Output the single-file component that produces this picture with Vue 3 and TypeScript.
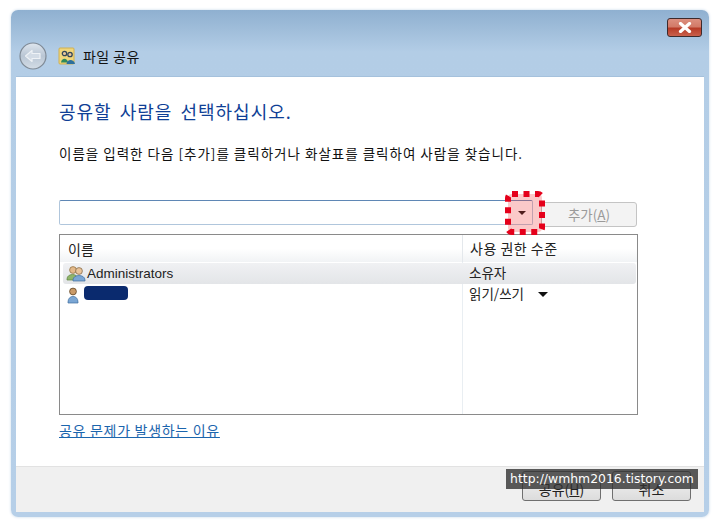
<script setup lang="ts">
// 파일 공유 대화상자
const rows = [
  { name: 'Administrators', level: '소유자', selected: true, hidden: false, menu: false, group: true },
  { name: '', level: '읽기/쓰기', selected: false, hidden: true, menu: true, group: false },
];
</script>

<template>
  <div class="page">
    <div class="window">
      <div class="chrome">
        <div class="close-row">
          <div class="close">
            <svg width="16" height="11" viewBox="0 0 16 11">
              <path d="M3.5 1.5 L12.5 9.5 M12.5 1.5 L3.5 9.5" fill="none" stroke="#fff" stroke-width="3.2" stroke-linecap="round" />
            </svg>
          </div>
        </div>
        <div class="nav-row">
          <div class="back">
            <svg width="28" height="28" viewBox="0 0 28 28">
              <defs>
                <linearGradient id="backFill" x1="0" y1="0" x2="0" y2="1">
                  <stop offset="0" stop-color="#dfe6ee" />
                  <stop offset="0.5" stop-color="#b9c6d4" />
                  <stop offset="1" stop-color="#d4dde6" />
                </linearGradient>
              </defs>
              <circle cx="14" cy="14" r="13" fill="url(#backFill)" stroke="#7f8a96" stroke-width="1.2" />
              <path d="M6.5 14 L13 8.5 V11.5 H21 V16.5 H13 V19.5 Z" fill="#d3dce6" stroke="#eef2f6" stroke-width="1.2" stroke-linejoin="round" />
            </svg>
          </div>
          <svg class="share-icon" width="18" height="18" viewBox="0 0 18 18">
            <rect x="1" y="1" width="15" height="16" rx="1" fill="#f0d67c" stroke="#d0b050" />
            <circle cx="6.5" cy="6.5" r="2.2" fill="#e8c79a" stroke="#33475a" stroke-width="1.3" />
            <circle cx="12" cy="7.5" r="2.2" fill="#e8c79a" stroke="#33475a" stroke-width="1.3" />
            <path d="M3 15.5 C3.5 10.5 9.5 10.5 10 15.5 Z" fill="#2f8a5c" />
            <path d="M8.5 17 C9 11.5 16 11.5 17 17 Z" fill="#2c6f9c" />
          </svg>
          <span class="window-title">파일 공유</span>
        </div>
      </div>

      <div class="client">
        <div class="content">
          <h1 class="heading">공유할 사람을 선택하십시오.</h1>
          <p class="desc">이름을 입력한 다음 [추가]를 클릭하거나 화살표를 클릭하여 사람을 찾습니다.</p>

          <div class="picker">
            <div class="combo">
              <div class="combo-btn"><span class="caret"></span></div>
            </div>
            <div class="add-btn">추가(<u>A</u>)</div>
            <svg class="highlight" width="40" height="44" viewBox="0 0 40 44">
              <rect x="3" y="3" width="34" height="38" rx="4" fill="#f03c3c" fill-opacity="0.28" stroke="#e5001b" stroke-width="6" stroke-dasharray="6 5.5" />
            </svg>
          </div>

          <div class="list">
            <div class="list-head">
              <div class="col-name">이름</div>
              <div class="col-level">사용 권한 수준</div>
            </div>
            <div class="list-body">
              <div v-for="(row, i) in rows" :key="i" class="row" :class="{ selected: row.selected }">
                <div class="col-name cell-name">
                  <svg v-if="row.group" width="20" height="17" viewBox="0 0 20 17">
                    <circle cx="7" cy="5" r="3.4" fill="#e3b98a" stroke="#8a6a3c" stroke-width=".7" />
                    <path d="M1 14 C1 8 12 8 12 14 V15 H1 Z" fill="#8fb56a" stroke="#5f8440" stroke-width=".7" />
                    <circle cx="13" cy="6" r="3.4" fill="#e9c49a" stroke="#7a6040" stroke-width=".7" />
                    <path d="M7 15 C7 9 19 9 19 15 V16 H7 Z" fill="#7aa6d4" stroke="#3f6f9f" stroke-width=".7" />
                  </svg>
                  <svg v-else class="user-icon" width="12" height="17" viewBox="0 0 12 17">
                    <circle cx="6" cy="4.5" r="3.4" fill="#c99a68" stroke="#5f4526" stroke-width=".8" />
                    <path d="M1 15 C1 7.5 11 7.5 11 15 V16 H1 Z" fill="#7aa6d4" stroke="#3f6f9f" stroke-width=".7" />
                  </svg>
                  <span v-if="row.hidden" class="redact"></span>
                  <span v-else>{{ row.name }}</span>
                </div>
                <div class="col-level cell-level">
                  {{ row.level }}
                  <span v-if="row.menu" class="caret menu-caret"></span>
                </div>
              </div>
            </div>
          </div>

          <a class="link">공유 문제가 발생하는 이유</a>
        </div>

        <div class="footer">
          <div class="btn">공유(<u>H</u>)</div>
          <div class="btn">취소</div>
          <div class="watermark">http://wmhm2016.tistory.com</div>
        </div>
      </div>
    </div>
  </div>
</template>

<style scoped>
.page {
  width: 720px;
  height: 528px;
  box-sizing: border-box;
  padding: 10px 11px;
  background: #fff;
  font-family: "Noto Sans CJK KR", "Liberation Sans", sans-serif;
  color: #1c1c1c;
  overflow: hidden;
}

.window {
  height: 507px;
  box-sizing: border-box;
  padding: 0 5px 5px;
  display: flex;
  flex-direction: column;
  background: linear-gradient(#8fb0d0 0, #b3cde6 42px, #b6cfe8 100%);
  border-radius: 7px;
  box-shadow: 0 0 3px #c4d6e8;
}

.chrome {
  height: 66px;
  flex: none;
  display: flex;
  flex-direction: column;
}

.close-row {
  display: flex;
  justify-content: flex-end;
  padding-top: 8px;
  padding-right: 2px;
}

.close {
  width: 33px;
  height: 17px;
  display: flex;
  align-items: center;
  justify-content: center;
  border: 1px solid #3d2a2c;
  border-radius: 3px;
  background: linear-gradient(#dc9080 0, #d27a68 45%, #b73c28 55%, #c9604c 100%);
}

.nav-row {
  display: flex;
  align-items: center;
  margin-top: 5px;
  margin-left: 3px;
}

.back {
  width: 28px;
  height: 28px;
  margin-right: 11px;
}

.share-icon {
  margin-right: 7px;
}

.window-title {
  font-size: 14px;
  letter-spacing: 0.4px;
  color: #111;
}

.client {
  flex: 1;
  display: flex;
  flex-direction: column;
  background: #fff;
  border-top: 1px solid #a5c1dc;
}

.content {
  flex: 1;
  padding: 0 43px;
  display: flex;
  flex-direction: column;
}

.heading {
  margin: 21px 0 0;
  height: 26px;
  line-height: 26px;
  font-size: 18px;
  font-weight: 400;
  letter-spacing: 1px;
  word-spacing: 3px;
  color: #0f3f96;
  white-space: nowrap;
}

.desc {
  margin: 20px 0 0;
  height: 18px;
  line-height: 18px;
  font-size: 13.5px;
  letter-spacing: 1px;
  color: #111;
  white-space: nowrap;
}

.picker {
  position: relative;
  display: flex;
  margin-top: 38px;
  height: 27px;
}

.combo {
  width: 474px;
  height: 25px;
  box-sizing: border-box;
  border: 1px solid #b0c6dc;
  border-top-color: #5f87b5;
  border-radius: 2px;
  display: flex;
  justify-content: flex-end;
}

.combo-btn {
  width: 21px;
  display: flex;
  align-items: center;
  justify-content: center;
}

.caret {
  display: inline-block;
  width: 0;
  height: 0;
  border-left: 4px solid transparent;
  border-right: 4px solid transparent;
  border-top: 4px solid #111;
}

.add-btn {
  width: 96px;
  height: 25px;
  margin-left: 8px;
  margin-top: 2px;
  box-sizing: border-box;
  border: 1px solid #c4c4c4;
  border-radius: 3px;
  background: #f3f3f3;
  color: #9a9a9a;
  font-size: 13.5px;
  line-height: 23px;
  text-align: center;
}

.highlight {
  position: absolute;
  left: 446px;
  top: -9px;
}

.list {
  margin-top: 7px;
  width: 579px;
  height: 181px;
  box-sizing: border-box;
  border: 1px solid #8a8a8a;
  display: flex;
  flex-direction: column;
}

.list-head {
  height: 27px;
  flex: none;
  display: flex;
  align-items: center;
  background: linear-gradient(#fff 0, #fff 50%, #f1f3f5 100%);
  font-size: 14px;
  color: #222;
}

.list-body {
  flex: 1;
  padding-top: 1px;
  background: linear-gradient(to right, #fff 402px, #e9eef2 402px, #e9eef2 403px, #fff 403px);
}

.row {
  height: 21px;
  display: flex;
  align-items: center;
  font-size: 13.5px;
  color: #222;
}

.row.selected {
  background: linear-gradient(#f0f1f3, #e3e5e8);
  border-radius: 3px;
  margin: 0 1px 0 3px;
}

.col-name {
  width: 402px;
  box-sizing: border-box;
  padding-left: 8px;
}

.col-level {
  flex: 1;
  padding-left: 7px;
}

.list-head .col-level {
  border-left: 1px solid #e4e8ec;
  height: 27px;
  line-height: 27px;
  letter-spacing: 0.5px;
}

.cell-level {
  margin-top: -3px;
}

.cell-name {
  display: flex;
  align-items: center;
  gap: 1px;
  padding-left: 2px;
  font-family: "Liberation Sans", "Noto Sans CJK KR", sans-serif;
  font-size: 13.5px;
}

.row.selected .cell-name {
  width: 399px;
  padding-left: 3px;
}

.row:not(.selected) .cell-name {
  padding-left: 7px;
}

.user-icon {
  margin-top: 1px;
  margin-right: 4px;
}

.redact {
  width: 44px;
  height: 14px;
  margin-top: -3px;
  border-radius: 4px;
  background: #0a2a6e;
}

.menu-caret {
  margin-left: 11px;
  vertical-align: 2px;
  border-left-width: 5px;
  border-right-width: 5px;
  border-top-width: 5px;
}

.link {
  margin-top: 5px;
  font-size: 14px;
  letter-spacing: 0.7px;
  line-height: 20px;
  color: #1b65ad;
  text-decoration: underline;
}

.footer {
  position: relative;
  height: 46px;
  flex: none;
  box-sizing: border-box;
  padding: 4px 13px 0 0;
  display: flex;
  justify-content: flex-end;
  gap: 11px;
  background: #f0f0f0;
  border-top: 1px solid #e2e2e2;
}

.btn {
  width: 79px;
  height: 30px;
  box-sizing: border-box;
  border: 1px solid #6f6f6f;
  border-radius: 3px;
  background: linear-gradient(#f6f6f6, #dcdcdc);
  font-size: 14px;
  line-height: 34px;
  text-align: center;
  color: #222;
}

.watermark {
  position: absolute;
  left: 490px;
  top: 2px;
  width: 192px;
  height: 20px;
  background: rgba(50, 50, 50, 0.8);
  color: #fff;
  font-family: "DejaVu Sans", "Liberation Sans", sans-serif;
  font-size: 12.4px;
  line-height: 20px;
  text-align: center;
  white-space: nowrap;
}
</style>
